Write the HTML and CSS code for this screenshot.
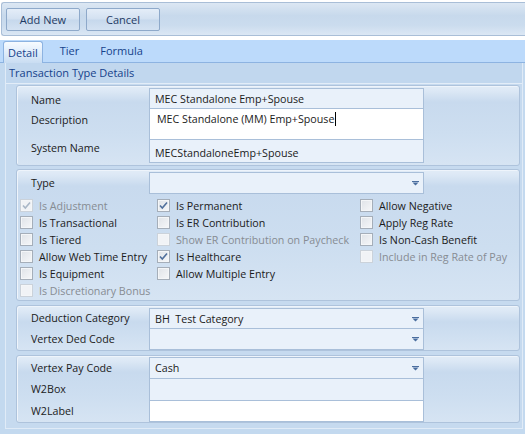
FILE: index.html
```html
<!DOCTYPE html>
<html lang="en">
<head>
  <meta charset="UTF-8" />
  <title>Transaction Type</title>
  <link rel="stylesheet" href="styles.css">
</head>
<body>
  <div class="toolbar">
    <button class="tool-btn">Add New</button>
    <button class="tool-btn">Cancel</button>
  </div>

  <div class="tabs">
    <div class="tab active">Detail</div>
    <div class="tab tab-tier">Tier</div>
    <div class="tab tab-formula">Formula</div>
  </div>

  <div class="page">
    <div class="frame">
      <div class="frame-head">Transaction Type Details</div>
      <div class="frame-body">

        <div class="group g-names">
          <div class="row h21">
            <div class="lbl lbl-top5">Name</div>
            <div class="field">MEC Standalone Emp+Spouse</div>
          </div>
          <div class="row h32">
            <div class="lbl lbl-top5">Description</div>
            <div class="field memo"><span class="caret">MEC Standalone (MM) Emp+Spouse</span></div>
          </div>
          <div class="row h24">
            <div class="lbl lbl-top1">System Name</div>
            <div class="field field-low">MECStandaloneEmp+Spouse</div>
          </div>
        </div>

        <div class="group g-flags">
          <div class="row h22">
            <div class="lbl">Type</div>
            <div class="field combo"><span></span><svg class="arrow" width="7" height="5" viewBox="0 0 7 5"><path d="M0 0h7v1H0z M0.5 1.5h6L3.5 4.5z"/></svg></div>
          </div>
          <div class="checks">
            <div class="chk disabled"><span class="box on"><svg viewBox="0 0 11 11"><path d="M2 5.5l2.3 2.5L9 2.5"/></svg></span>Is Adjustment</div>
            <div class="chk"><span class="box on"><svg viewBox="0 0 11 11"><path d="M2 5.5l2.3 2.5L9 2.5"/></svg></span>Is Permanent</div>
            <div class="chk"><span class="box"></span>Allow Negative</div>

            <div class="chk"><span class="box"></span>Is Transactional</div>
            <div class="chk"><span class="box"></span>Is ER Contribution</div>
            <div class="chk"><span class="box"></span>Apply Reg Rate</div>

            <div class="chk"><span class="box"></span>Is Tiered</div>
            <div class="chk disabled"><span class="box"></span>Show ER Contribution on Paycheck</div>
            <div class="chk"><span class="box"></span>Is Non-Cash Benefit</div>

            <div class="chk"><span class="box"></span>Allow Web Time Entry</div>
            <div class="chk"><span class="box on"><svg viewBox="0 0 11 11"><path d="M2 5.5l2.3 2.5L9 2.5"/></svg></span>Is Healthcare</div>
            <div class="chk disabled"><span class="box"></span>Include in Reg Rate of Pay</div>

            <div class="chk"><span class="box"></span>Is Equipment</div>
            <div class="chk"><span class="box"></span>Allow Multiple Entry</div>
            <div></div>

            <div class="chk disabled"><span class="box"></span>Is Discretionary Bonus</div>
          </div>
        </div>

        <div class="group g-deduct">
          <div class="row h21">
            <div class="lbl">Deduction Category</div>
            <div class="field combo"><span>BH&nbsp; Test Category</span><svg class="arrow" width="7" height="5" viewBox="0 0 7 5"><path d="M0 0h7v1H0z M0.5 1.5h6L3.5 4.5z"/></svg></div>
          </div>
          <div class="row h22">
            <div class="lbl">Vertex Ded Code</div>
            <div class="field combo"><span></span><svg class="arrow" width="7" height="5" viewBox="0 0 7 5"><path d="M0 0h7v1H0z M0.5 1.5h6L3.5 4.5z"/></svg></div>
          </div>
        </div>

        <div class="group g-pay">
          <div class="row h22">
            <div class="lbl">Vertex Pay Code</div>
            <div class="field combo"><span>Cash</span><svg class="arrow" width="7" height="5" viewBox="0 0 7 5"><path d="M0 0h7v1H0z M0.5 1.5h6L3.5 4.5z"/></svg></div>
          </div>
          <div class="row h23">
            <div class="lbl">W2Box</div>
            <div class="field"></div>
          </div>
          <div class="row h22">
            <div class="lbl">W2Label</div>
            <div class="field white"></div>
          </div>
        </div>

      </div>
    </div>
  </div>
</body>
</html>
```

FILE: styles.css
```css
* {
  margin: 0;
  padding: 0;
  box-sizing: border-box;
}
body {
  font-family: "Open Sans", sans-serif;
  font-size: 10.7px;
  color: #1b1b1b;
  background: #fff;
  width: 525px;
  height: 434px;
  overflow: hidden;
}

/* toolbar */
.toolbar {
  margin: 2px 0 0 1px;
  height: 34px;
  border: 1px solid #a9bed7;
  border-right: none;
  border-radius: 3px 0 0 3px;
  background: linear-gradient(#dce7f3, #c7d9ec 40%, #cbdcee 70%, #dbe7f4);
  display: flex;
  gap: 6px;
  padding: 5px 0 0 4px;
}
.tool-btn {
  width: 74px;
  height: 23px;
  border: 1px solid #8ea9ca;
  border-radius: 2px;
  background: linear-gradient(#e4edf8, #d3e1f1 48%, #c6d8ec 52%, #d4e2f2);
  color: #1e3a63;
  font-family: inherit;
  font-size: 11px;
}

/* tabs */
.tabs {
  margin-top: 4px;
  height: 23px;
  background: #bcdafb;
  border-bottom: 1px solid #8db3e1;
  display: flex;
  align-items: flex-end;
  padding-left: 3px;
}
.tab {
  height: 22px;
  line-height: 21px;
  color: #15428b;
  font-size: 11px;
}
.tab.active {
  height: 22px;
  margin-bottom: -1px;
  padding: 0 4px;
  border: 1px solid #8db3e1;
  border-bottom: none;
  border-radius: 3px 3px 0 0;
  background: linear-gradient(#f7fbff, #e2eefb 45%, #c9ddf2);
}
.tab-tier {
  margin-left: 17px;
}
.tab-formula {
  margin-left: 21px;
}

/* page frame */
.page {
  background: #c3d9ef;
  padding: 0 2px 6px 5px;
  height: 372px;
}
.frame {
  border: 1px solid #e0ebf7;
  border-top: none;
}
.frame-head {
  height: 20px;
  line-height: 19px;
  padding-left: 3px;
  color: #15428b;
  font-size: 11px;
  background: #c1d7ee;
}
.frame-body {
  border-top: 1px solid #e3edf8;
  padding: 1px 2px 5px 10px;
  background: #c6daef;
}

/* groups */
.group {
  width: 504px;
  border: 1px solid #aec3dc;
  border-radius: 3px;
  background: linear-gradient(#e2ecf7 0, #dce8f5 5px, #c8daee 16px, #cddef0 60%, #d6e4f3 100%);
  box-shadow: inset 1px 1px 0 #eef4fb;
}
.g-names {
  padding: 2px 0;
}
.g-flags {
  margin-top: 3px;
  padding: 2px 0 1px;
}
.g-deduct {
  margin-top: 4px;
  padding-top: 2px;
}
.g-pay {
  margin-top: 4px;
  padding-top: 1px;
}

.row {
  display: flex;
  align-items: center;
}
.row + .row {
  margin-top: -1px;
}
.h21 { height: 21px; }
.h22 { height: 22px; }
.h23 { height: 23px; }
.h24 { height: 24px; }
.h32 { height: 32px; }

.lbl {
  width: 132px;
  padding-left: 14px;
  line-height: 15px;
}
.lbl-top5 {
  align-self: flex-start;
  padding-top: 5px;
}
.lbl-top1 {
  align-self: flex-start;
  padding-top: 2px;
}

.field {
  width: 275px;
  height: 100%;
  border: 1px solid #a9bfd9;
  background: #e9f1fa;
  padding: 2px 5px 0;
  line-height: 16px;
}
.field-low {
  padding-top: 5px;
}
.field.white {
  background: #fff;
}
.field.memo {
  background: #fff;
  padding: 2px 7px 0;
}
.caret {
  border-right: 1px solid #000;
  padding-right: 1px;
}
.combo {
  display: flex;
  align-items: center;
  justify-content: space-between;
  padding: 0 4px 0 5px;
}
.arrow {
  fill: #4b6e9f;
  margin-top: 1px;
}

/* checkboxes */
.checks {
  margin-top: 3px;
  padding-left: 3px;
  display: grid;
  grid-template-columns: 137px 203px 1fr;
  grid-auto-rows: 17px;
}
.chk {
  display: flex;
  align-items: center;
  gap: 6px;
  white-space: nowrap;
}
.box {
  width: 13px;
  height: 13px;
  flex: none;
  border: 1px solid #a5aeb9;
  background: linear-gradient(135deg, #dfe3e8, #f6f7f9);
  box-shadow: inset 0 0 0 1px #f4f6f8;
  display: flex;
  align-items: center;
  justify-content: center;
}
.box svg {
  width: 11px;
  height: 11px;
  fill: none;
  stroke: #51709c;
  stroke-width: 1.6;
}
.chk.disabled {
  color: #878c93;
}
.chk.disabled .box {
  border-color: #cbd2da;
  background: #f1f3f6;
}
.chk.disabled .box svg {
  stroke: #a9b7c7;
}
```
